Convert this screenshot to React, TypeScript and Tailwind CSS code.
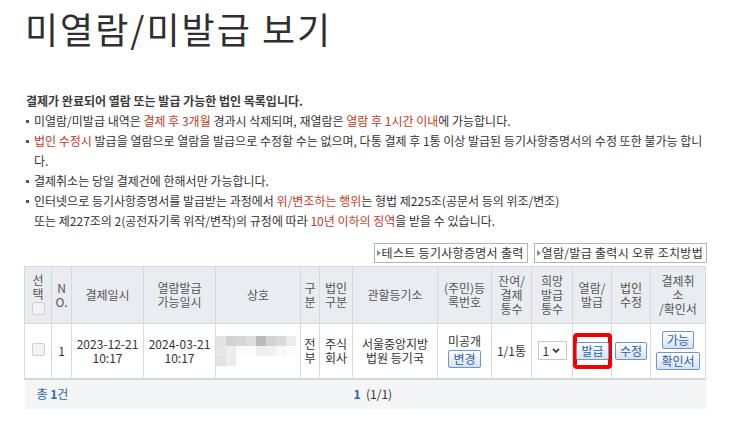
import React from "react";

const red = "text-[#c23b26]";

function Btn({ children }: { children: React.ReactNode }) {
  return (
    <span className="inline-flex h-[18px] items-center whitespace-nowrap rounded-[2px] border border-[#6f96c8] bg-linear-to-b from-white to-[#d6e2f1] px-[4px] text-[12px] leading-none text-[#2b5fa6]">
      {children}
    </span>
  );
}

function TopBtn({ children }: { children: React.ReactNode }) {
  return (
    <span className="inline-flex h-[20px] items-center gap-[1px] whitespace-nowrap border border-[#b5b5b5] bg-white pr-[3px] pl-[2px] text-[12px] tracking-[0.3px] text-[#333]">
      <svg width="4" height="6" viewBox="0 0 4 6">
        <path d="M0 0 L4 3 L0 6 Z" fill="#5b95e0" />
      </svg>
      {children}
    </span>
  );
}

function Check() {
  return <span className="inline-block h-[13px] w-[13px] rounded-[2px] border border-[#cfcfcf] bg-[#f3f3f3]" />;
}

const blur = [
  ["#e3e3e3", "#d3d3d3", "#d6d6d6", "#dddddd", "#bbbbbb", "#d2d2d2", "#dbdbdb", "#ececec"],
  ["#e6e6e6", "#ededed", "#fbfbfb", "#fbfbfb", "#efefef", "#f0f0f0", "#f8f8f8", "#fdfdfd"],
  ["#e3e3e3", "#ececec", "#ffffff", "#ffffff", "#ffffff", "#ffffff", "#ffffff", "#ffffff"],
];

const widths = [27, 20, 72, 72, 85, 19, 33, 85, 54, 40, 41, 39, 39, 55];

const headers: string[][] = [
  ["선", "택"],
  ["N", "O."],
  ["결제일시"],
  ["열람발급", "가능일시"],
  ["상호"],
  ["구", "분"],
  ["법인", "구분"],
  ["관할등기소"],
  ["(주민)등", "록번호"],
  ["잔여/", "결제", "통수"],
  ["희망", "발급", "통수"],
  ["열람/", "발급"],
  ["법인", "수정"],
  ["결제취", "소", "/확인서"],
];

const cell = "border border-[#d6d9dd] p-0";

export default function App() {
  return (
    <div
      className="min-h-[426px] w-[734px] bg-white px-[24px] text-[#333]"
      style={{ fontFamily: '"Noto Sans CJK KR", "Noto Sans", sans-serif' }}
    >
      <h1 className="flex h-[56px] items-center pl-[1px] text-[36px] font-normal tracking-[2px] text-[#2f2f2f]">
        미열람/미발급 보기
      </h1>

      <div className="mt-[35px] text-[12px] leading-[20px]">
        <p className="pl-[2px] font-bold text-[#3a3a3a]">결제가 완료되어 열람 또는 발급 가능한 법인 목록입니다.</p>
        <ul className="pl-[2px]">
          <li className="flex">
            <span className="mt-[9px] mr-[5px] h-[3px] w-[3px] shrink-0 bg-[#555]" />
            <span>
              미열람/미발급 내역은 <span className={red}>결제 후 3개월</span> 경과시 삭제되며, 재열람은{" "}
              <span className={red}>열람 후 1시간 이내</span>에 가능합니다.
            </span>
          </li>
          <li className="flex">
            <span className="mt-[9px] mr-[5px] h-[3px] w-[3px] shrink-0 bg-[#555]" />
            <span>
              <span className={red}>법인 수정시</span> 발급을 열람으로 열람을 발급으로 수정할 수는 없으며, 다통 결제 후 1통 이상 발급된 등기사항증명서의 수정 또한 불가능 합니
              <br />
              다.
            </span>
          </li>
          <li className="flex">
            <span className="mt-[9px] mr-[5px] h-[3px] w-[3px] shrink-0 bg-[#555]" />
            <span>결제취소는 당일 결제건에 한해서만 가능합니다.</span>
          </li>
          <li className="flex">
            <span className="mt-[9px] mr-[5px] h-[3px] w-[3px] shrink-0 bg-[#555]" />
            <span>
              인터넷으로 등기사항증명서를 발급받는 과정에서 <span className={red}>위/변조하는 행위</span>는 형법 제225조(공문서 등의 위조/변조)
              <br />
              또는 제227조의 2(공전자기록 위작/변작)의 규정에 따라 <span className={red}>10년 이하의 징역</span>을 받을 수 있습니다.
            </span>
          </li>
        </ul>
      </div>

      <div className="mt-[12px] flex justify-end gap-[6px] pr-[3px]">
        <TopBtn>테스트 등기사항증명서 출력</TopBtn>
        <TopBtn>열람/발급 출력시 오류 조치방법</TopBtn>
      </div>

      <table className="mt-[3px] w-[682px] table-fixed border-collapse text-center text-[12px] leading-[14px]">
        <colgroup>
          {widths.map((w, i) => (
            <col key={i} style={{ width: w }} />
          ))}
        </colgroup>
        <thead>
          <tr className="h-[57px] bg-[#e9edf2] text-[#555]">
            {headers.map((lines, i) => (
              <th key={i} className={`${cell} font-normal`}>
                {lines.map((l, j) => (
                  <div key={j}>{l}</div>
                ))}
                {i === 0 && (
                  <div className="mt-[1px]">
                    <Check />
                  </div>
                )}
              </th>
            ))}
          </tr>
        </thead>
        <tbody>
          <tr className="h-[55px] text-[#333]">
            <td className={cell}>
              <Check />
            </td>
            <td className={cell}>1</td>
            <td className={cell}>
              <div>2023-12-21</div>
              <div>10:17</div>
            </td>
            <td className={cell}>
              <div>2024-03-21</div>
              <div>10:17</div>
            </td>
            <td className={cell}>
              <div className="flex flex-col">
                {blur.map((row, r) => (
                  <div key={r} className="flex">
                    {row.map((c, k) => (
                      <span key={k} className="h-[10px] w-[10px]" style={{ background: c }} />
                    ))}
                  </div>
                ))}
              </div>
            </td>
            <td className={cell}>
              <div>전</div>
              <div>부</div>
            </td>
            <td className={cell}>
              <div>주식</div>
              <div>회사</div>
            </td>
            <td className={cell}>
              <div>서울중앙지방</div>
              <div>법원 등기국</div>
            </td>
            <td className={cell}>
              <div>미공개</div>
              <div className="mt-[2px]">
                <Btn>변경</Btn>
              </div>
            </td>
            <td className={cell}>1/1통</td>
            <td className={cell}>
              <span className="inline-flex h-[19px] w-[29px] items-center gap-[3px] border border-[#c8c8c8] bg-white pl-[4px]">
                <span>1</span>
                <svg width="8" height="6" viewBox="0 0 8 6">
                  <path d="M1 1 L4 4 L7 1" stroke="#444" strokeWidth="1.8" fill="none" />
                </svg>
              </span>
            </td>
            <td className={cell}>
              <span className="inline-flex h-[36px] w-[39px] items-center justify-center rounded-[4px] border-[4px] border-[#f00000]">
                <Btn>발급</Btn>
              </span>
            </td>
            <td className={cell}>
              <Btn>수정</Btn>
            </td>
            <td className={cell}>
              <div className="flex flex-col items-center gap-[3px]">
                <Btn>가능</Btn>
                <Btn>확인서</Btn>
              </div>
            </td>
          </tr>
          <tr className="h-[30px] border-t-[2px] border-[#d3d6da] bg-[#f4f5f7]">
            <td colSpan={14} className="p-0">
              <div className="relative flex h-[28px] items-center">
                <span className="pl-[12px] text-[#2b64b4]">
                  총 <b className="font-bold">1</b>건
                </span>
                <span className="absolute left-[329px] text-[#333]">
                  <b className="font-bold text-[#2b64b4]">1</b> &nbsp;(1/1)
                </span>
              </div>
            </td>
          </tr>
        </tbody>
      </table>
    </div>
  );
}
